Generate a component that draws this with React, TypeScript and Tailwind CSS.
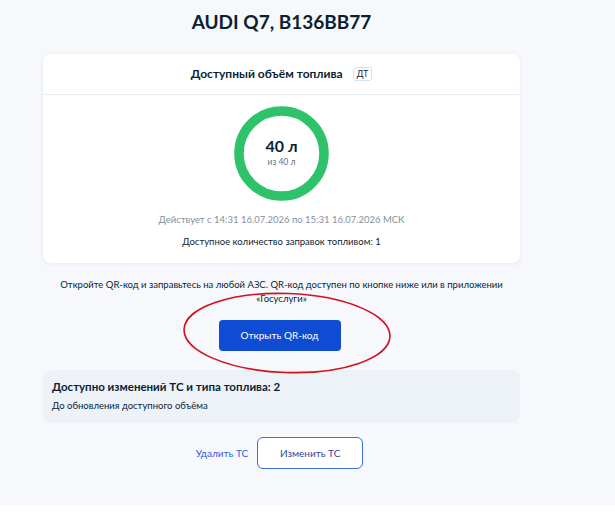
import React from "react";

export default function App() {
  const font = { fontFamily: "Lato, 'Noto Sans', sans-serif" };
  return (
    <div className="w-[615px] h-[512px] bg-white overflow-hidden" style={font}>
      <div className="h-[505px] bg-[#f6f8fc]">
        <div className="ml-[43px] w-[477px] flex flex-col">
          <h1 className="h-[44px] pt-[9px] text-center text-[19px] leading-[26px] font-bold text-[#0b1f33]">
            AUDI Q7, B136BB77
          </h1>
          <div className="mt-[10px] bg-white rounded-[8px] shadow-[0_1px_4px_rgba(200,210,230,0.35)] flex flex-col">
            <div className="h-[41px] border-b border-[#e7eaef] flex items-center justify-center gap-[10px]">
              <span className="text-[12px] font-bold text-[#0b1f33]">Доступный объём топлива</span>
              <span className="h-[14px] px-[3px] border-[1.5px] border-[#d5e1f6] rounded-[3px] text-[8.5px] leading-[11px] text-[#0b1f33] flex items-center">
                ДТ
              </span>
            </div>
            <div className="flex flex-col items-center pt-[11px] pb-[14px]">
              <div className="relative w-[95px] h-[95px]">
                <svg width="95" height="95" viewBox="0 0 95 95">
                  <circle cx="47.5" cy="47.5" r="42.5" fill="none" stroke="#2ec26a" strokeWidth="9.5" />
                </svg>
                <div className="absolute inset-0 flex flex-col items-center justify-center">
                  <span className="text-[16px] leading-[18px] font-bold text-[#0b1f33] mt-[-3px]">40 л</span>
                  <span className="text-[8.5px] leading-[10px] text-[#66727f] mt-[2px]">из 40 л</span>
                </div>
              </div>
              <p className="mt-[12px] text-[9.5px] leading-[14px] text-[#86909c]">
                Действует с 14:31 16.07.2026 по 15:31 16.07.2026 МСК
              </p>
              <p className="mt-[8px] text-[9.5px] leading-[14px] text-[#0b1f33]">
                Доступное количество заправок топливом: 1
              </p>
            </div>
          </div>
          <p className="mt-[15px] text-center text-[9.5px] leading-[14px] text-[#0b1f33]">
            Откройте QR-код и заправьтесь на любой АЗС. QR-код доступен по кнопке ниже или в приложении «Госуслуги»
          </p>
          <div className="relative mt-[14px] flex justify-center">
            <button className="ml-[-4px] w-[122px] h-[31px] rounded-[4px] bg-[#0d4cd3] text-white text-[10px]">
              Открыть QR-код
            </button>
            <svg
              className="absolute left-[137px] top-[-32px] pointer-events-none"
              width="214"
              height="90"
              viewBox="0 0 214 90"
            >
              <ellipse
                cx="107"
                cy="45"
                rx="103"
                ry="39.5"
                fill="none"
                stroke="#d2111d"
                strokeWidth="1.6"
                transform="rotate(2 107 45)"
              />
            </svg>
          </div>
          <div className="mt-[19px] h-[53px] rounded-[8px] bg-[#edf1f8] px-[9px] pt-[9px]">
            <p className="text-[11.5px] leading-[15px] font-bold text-[#0b1f33]">
              Доступно изменений ТС и типа топлива: 2
            </p>
            <p className="mt-[5px] text-[9.5px] leading-[13px] text-[#0b1f33]">До обновления доступного объёма</p>
          </div>
          <div className="mt-[14px] flex items-center justify-center gap-[9px] ml-[-4px]">
            <span className="text-[10px] text-[#2f5fd8]">Удалить ТС</span>
            <button className="w-[106px] h-[32px] rounded-[6px] border-[1.5px] border-[#3b6ee0] bg-white text-[10px] text-[#34459e]">
              Изменить ТС
            </button>
          </div>
        </div>
      </div>
    </div>
  );
}
